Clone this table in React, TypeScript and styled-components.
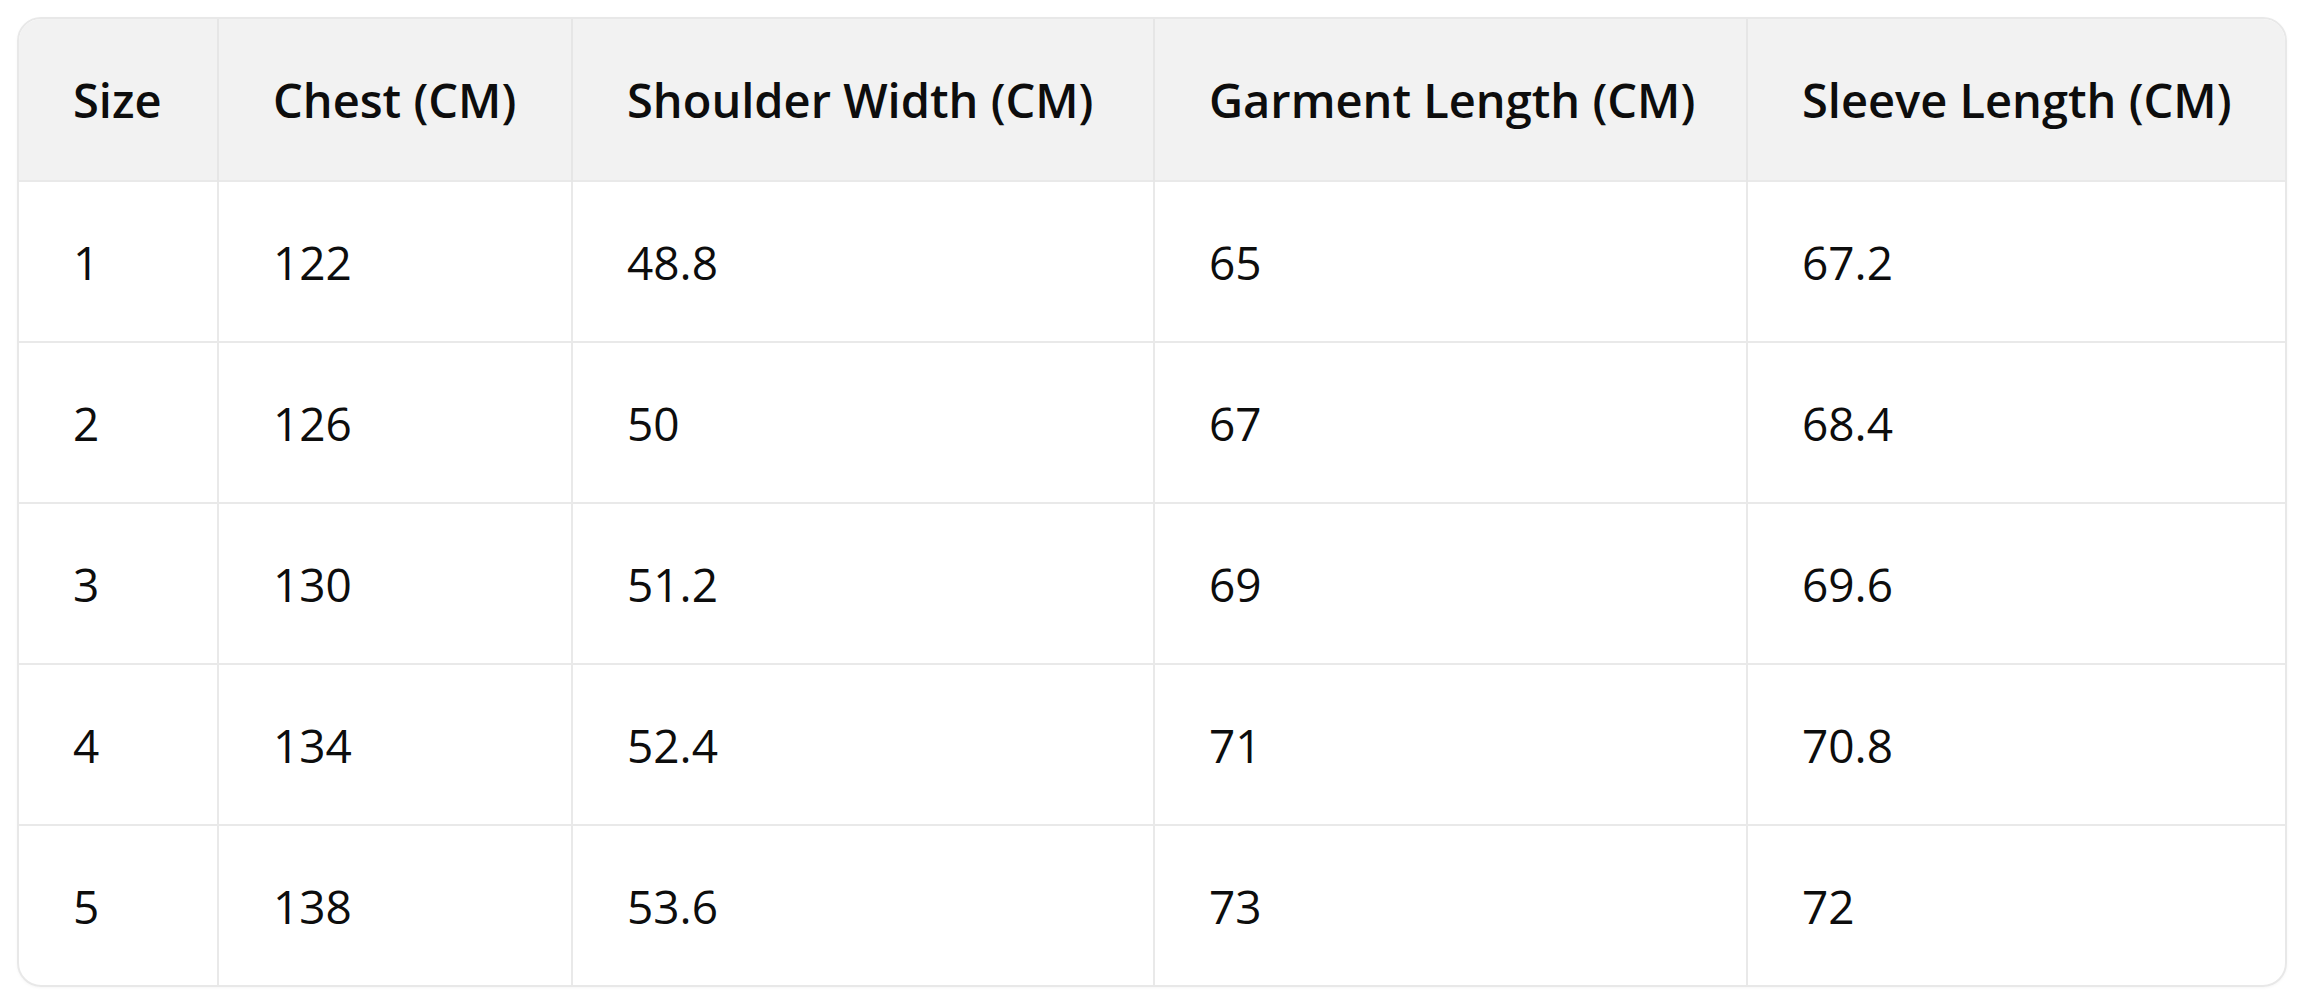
import styled, { createGlobalStyle } from 'styled-components';

type SizeRow = {
  size: string;
  chest: string;
  shoulder: string;
  length: string;
  sleeve: string;
};

const columns: { label: string; width: number }[] = [
  { label: 'Size', width: 199 },
  { label: 'Chest (CM)', width: 354 },
  { label: 'Shoulder Width (CM)', width: 582 },
  { label: 'Garment Length (CM)', width: 593 },
  { label: 'Sleeve Length (CM)', width: 542 },
];

const rows: SizeRow[] = [
  { size: '1', chest: '122', shoulder: '48.8', length: '65', sleeve: '67.2' },
  { size: '2', chest: '126', shoulder: '50', length: '67', sleeve: '68.4' },
  { size: '3', chest: '130', shoulder: '51.2', length: '69', sleeve: '69.6' },
  { size: '4', chest: '134', shoulder: '52.4', length: '71', sleeve: '70.8' },
  { size: '5', chest: '138', shoulder: '53.6', length: '73', sleeve: '72' },
];

const GlobalStyle = createGlobalStyle`
  html, body {
    margin: 0;
    padding: 0;
    background: #ffffff;
  }
  body {
    font-family: "Open Sans", "Noto Sans", "Liberation Sans", sans-serif;
    color: #0d0d0d;
  }
`;

const Page = styled.div`
  padding: 17px 17px 17px 17px;
`;

const Card = styled.div`
  width: 2270px;
  border: 2px solid #e8e8e8;
  border-radius: 24px;
  overflow: hidden;
  box-sizing: border-box;
  box-shadow: 0 1px 3px rgba(0, 0, 0, 0.04);
`;

const Table = styled.table`
  width: 100%;
  border-collapse: collapse;
  table-layout: fixed;
`;

const HeadCell = styled.th<{ $first?: boolean }>`
  background: #f2f2f2;
  height: 161px;
  padding: 0 0 0 54px;
  text-align: left;
  font-size: 47px;
  font-weight: 600;
  color: #0d0d0d;
  border-left: ${(p) => (p.$first ? 'none' : '2px solid #e6e6e6')};
  white-space: nowrap;
`;

const Cell = styled.td<{ $first?: boolean }>`
  height: 159px;
  padding: 0 0 0 54px;
  font-size: 46px;
  font-weight: 400;
  color: #0d0d0d;
  border-top: 2px solid #e9e9e9;
  border-left: ${(p) => (p.$first ? 'none' : '2px solid #e9e9e9')};
`;

const App = () => {
  return (
    <>
      <GlobalStyle />
      <Page>
        <Card>
          <Table>
            <colgroup>
              {columns.map((c) => (
                <col key={c.label} style={{ width: c.width }} />
              ))}
            </colgroup>
            <thead>
              <tr>
                {columns.map((c, i) => (
                  <HeadCell key={c.label} $first={i === 0}>
                    {c.label}
                  </HeadCell>
                ))}
              </tr>
            </thead>
            <tbody>
              {rows.map((r) => (
                <tr key={r.size}>
                  <Cell $first>{r.size}</Cell>
                  <Cell>{r.chest}</Cell>
                  <Cell>{r.shoulder}</Cell>
                  <Cell>{r.length}</Cell>
                  <Cell>{r.sleeve}</Cell>
                </tr>
              ))}
            </tbody>
          </Table>
        </Card>
      </Page>
    </>
  );
};

export default App;
